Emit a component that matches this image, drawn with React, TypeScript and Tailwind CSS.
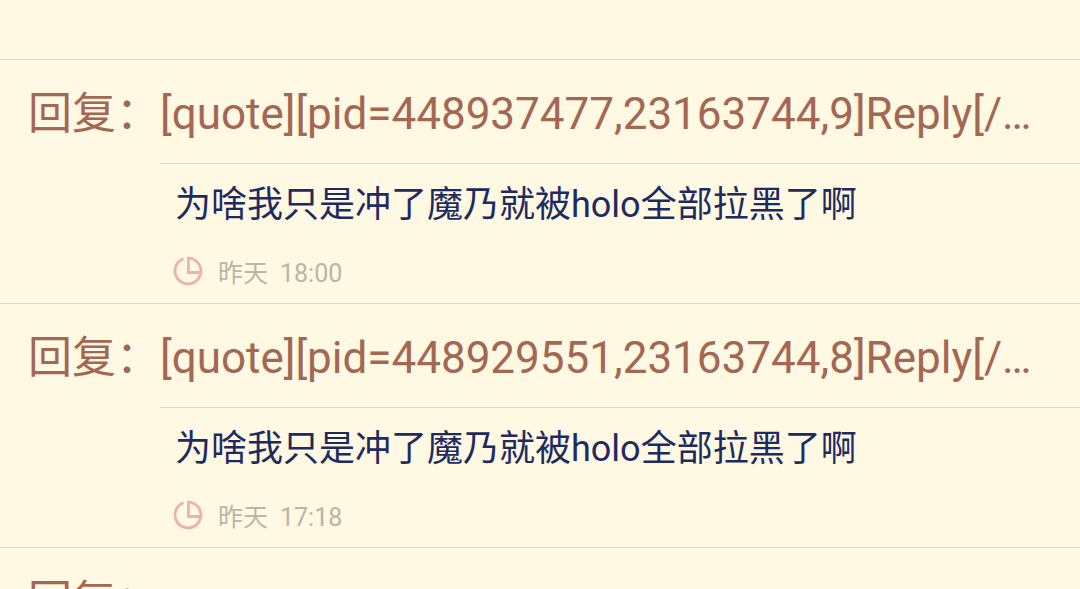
type Reply = {
  title: string;
  body: string;
  day: string;
  time: string;
};

const replies: Reply[] = [
  {
    title: "[quote][pid=448937477,23163744,9]Reply[/pid]",
    body: "为啥我只是冲了魔乃就被holo全部拉黑了啊",
    day: "昨天",
    time: "18:00",
  },
  {
    title: "[quote][pid=448929551,23163744,8]Reply[/pid]",
    body: "为啥我只是冲了魔乃就被holo全部拉黑了啊",
    day: "昨天",
    time: "17:18",
  },
];

function ClockIcon() {
  return (
    <svg
      className="size-[30px] shrink-0 text-[#ecb3ac]"
      viewBox="0 0 30 30"
      fill="none"
      stroke="currentColor"
      strokeWidth="2.8"
      aria-hidden="true"
    >
      <path d="M9.4 3.2A13 13 0 1 0 28 15.5A13 13 0 0 0 15.4 2.2V16.5H28" strokeLinecap="round" />
    </svg>
  );
}

function ReplyLabel() {
  return <span className="w-40 shrink-0 pl-7 whitespace-nowrap">回复：</span>;
}

function ReplyItem({ reply }: { reply: Reply }) {
  return (
    <li className="border-b border-[#e2d8b0]">
      <h2 className="flex pt-7 pb-3 text-[44px] leading-13 text-[#a36752]">
        <ReplyLabel />
        <span className="min-w-0 flex-1 truncate pr-7 pb-[11px]">{reply.title}</span>
      </h2>
      <div className="ml-40 border-t border-[#e2d8b0] pt-4 pb-[11px] pl-[13px]">
        <p className="pl-0.5 text-[36px] leading-[50px] text-[#1d2b60]">{reply.body}</p>
        <div className="mt-[26px] flex items-start gap-[15px] text-[25px] leading-9 text-[#bab5a6]">
          <ClockIcon />
          <span className="flex gap-3">
            <span>{reply.day}</span>
            <time>{reply.time}</time>
          </span>
        </div>
      </div>
    </li>
  );
}

export default function App() {
  return (
    <main
      lang="zh-CN"
      className="h-screen overflow-hidden bg-[#fff8e3] pt-[59px] font-['Roboto','Noto_Sans_CJK_SC',sans-serif]"
    >
      <ul className="border-t border-[#e2d8b0]">
        {replies.map((reply) => (
          <ReplyItem key={reply.time} reply={reply} />
        ))}
        <li className="flex pt-7 text-[44px] leading-13 text-[#a36752]">
          <ReplyLabel />
        </li>
      </ul>
    </main>
  );
}
